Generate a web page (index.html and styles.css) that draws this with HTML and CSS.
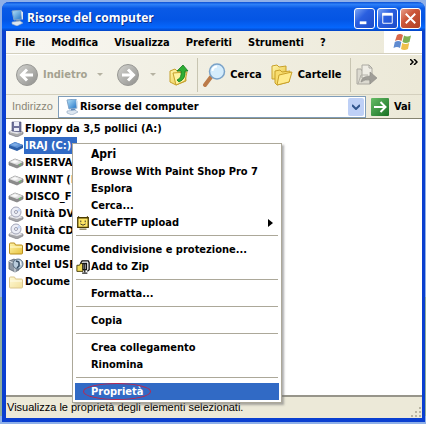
FILE: index.html
```html
<!DOCTYPE html>
<html lang="it">
<head>
  <meta charset="UTF-8" />
  <title>Risorse del computer</title>
  <meta name="viewport" content="width=device-width, initial-scale=1.0" />
  <link rel="stylesheet" href="styles.css">
</head>
<body>

<svg class="sprite" width="0" height="0" aria-hidden="true">
  <defs>
    <linearGradient id="gGray" x1="0" y1="0" x2="1" y2="1">
      <stop offset="0" stop-color="#d4d4d0" /><stop offset="1" stop-color="#8f8f8c" />
    </linearGradient>
    <linearGradient id="gYellow" x1="0" y1="0" x2="1" y2="1">
      <stop offset="0" stop-color="#fff6ae" /><stop offset="1" stop-color="#e8c23c" />
    </linearGradient>
    <linearGradient id="gGreen" x1="0" y1="0" x2="1" y2="1">
      <stop offset="0" stop-color="#67bd67" /><stop offset="1" stop-color="#187024" />
    </linearGradient>
    <linearGradient id="gScreen" x1="0" y1="0" x2="1" y2="1">
      <stop offset="0" stop-color="#b9e6fb" /><stop offset="1" stop-color="#1c6fc4" />
    </linearGradient>
  </defs>
  <symbol id="computer" viewBox="0 0 16 16">
    <path d="M3 1l9-1 1 9-8 1z" fill="url(#gScreen)" stroke="#7fa3c8" />
    <path d="M12 1l2 1v7l-1 1z" fill="#dbe6f2" />
    <path d="M7 10h4l1 2H7z" fill="#5d86ba" />
    <path d="M3 12l8-1 3 2-6 3-5-2z" fill="#dce6f0" stroke="#8ba4c0" stroke-width=".6" />
  </symbol>
  <symbol id="drive" viewBox="0 0 16 16">
    <path d="M1 7l6-3 8 3v3l-6 3-8-3z" fill="#8c8c8c" stroke="#777" stroke-width=".7" />
    <path d="M1 7l6-3 8 3-6 3z" fill="#dedede" />
    <path d="M3 7l4-2 4 2-4 1z" fill="#fafafa" />
    <path d="M11 10l2-1" stroke="#5bd45b" />
  </symbol>
  <symbol id="driveSel" viewBox="0 0 16 16">
    <path d="M1 7l6-3 8 3v3l-6 3-8-3z" fill="#2c5fa8" />
    <path d="M1 7l6-3 8 3-6 3z" fill="#5f93d6" />
    <path d="M3 7l4-2 4 2-4 1z" fill="#7eade6" />
  </symbol>
  <symbol id="floppy" viewBox="0 0 16 16">
    <path d="M1 11l4-2 10 2v2l-6 3-8-3z" fill="#aaa" stroke="#6c6c7c" stroke-width=".6" />
    <path d="M1 11l4-2 10 2-6 2z" fill="#e4e4ea" />
    <path d="M4 1h9v10l-9-1z" fill="#6f729c" stroke="#4c4f74" stroke-width=".6" />
    <path d="M6 1h5v4H6zM6 7h5v3H6z" fill="#eceef8" />
  </symbol>
  <symbol id="disc" viewBox="0 0 16 16">
    <path d="M1 11l5-3 9 3v2l-6 3-8-3z" fill="#a4a4a8" stroke="#77777c" stroke-width=".6" />
    <path d="M1 11l5-3 9 3-6 2z" fill="#e8e8ec" />
    <circle cx="8" cy="6" r="5" fill="#eceef6" stroke="#a2a5b8" />
    <path d="M8 6l3-4 2 3z" fill="#c8d8f4" />
    <circle cx="8" cy="6" r="1.500" fill="#fff" stroke="#8588a0" stroke-width=".8" />
  </symbol>
  <symbol id="folder" viewBox="0 0 16 16">
    <path d="M1.500 13V4q0-1 1-1h4l1 2h6q1 0 1 1v7q0 1-1 1h-11q-1 0-1-1z" fill="url(#gYellow)" stroke="#b98e1e" />
    <path d="M2 7h12" stroke="#fffbd6" />
  </symbol>
  <symbol id="usb" viewBox="0 0 16 16">
    <path d="M1 4l5-2 5 3v8l-4 2-6-3z" fill="#8e98a4" stroke="#4d5864" stroke-width=".7" />
    <path d="M1 4l6 3v8" fill="none" stroke="#e2e8ee" />
    <circle cx="10" cy="7" r="5" fill="#b9ccdc" stroke="#42586c" stroke-width=".8" />
    <path d="M8 4l3 1v4l-2 2" fill="none" stroke="#32485e" stroke-width="1.500" />
    <path d="M12 4l1 4" stroke="#fff" />
  </symbol>
  <symbol id="face" viewBox="0 0 16 16">
    <path d="M2 2h12v11H2z" fill="#ffe766" stroke="#4a3a00" stroke-width="1.500" />
    <path d="M3 2V0M13 2V0M4 15h8" stroke="#4a3a00" fill="none" />
    <path d="M5 5h1v2H5zM10 5h1v2h-1z" fill="#222" />
    <path d="M5 9q3 3 6 0" fill="none" stroke="#222" />
  </symbol>
  <symbol id="zip" viewBox="0 0 16 16">
    <path d="M1 6h3l1-2h3v9H1z" fill="#f2dc5a" stroke="#3c3200" />
    <path d="M5 4l2-3h7l1 2v8l-2 2" fill="none" stroke="#111" stroke-width="1.500" />
    <path d="M8 4h4v7H8z" fill="#fff" stroke="#111" stroke-width="1.500" />
    <path d="M10 4v10M7 15h6" fill="none" stroke="#222" stroke-width="1.500" />
  </symbol>
</svg>

<main class="window">
  <header class="titlebar">
    <svg class="icon"><use href="#computer" /></svg>
    <h1>Risorse del computer</h1>
    <button class="caption" aria-label="Riduci a icona"><svg viewBox="0 0 20 20"><path d="M5 13h7v3H5z" fill="#fff" /></svg></button>
    <button class="caption" aria-label="Ingrandisci"><svg viewBox="0 0 20 20"><path d="M5 5h10v10H5z" fill="none" stroke="#fff" /><path d="M4.500 4h11v3h-11z" fill="#fff" /></svg></button>
    <button class="caption close" aria-label="Chiudi"><svg viewBox="0 0 20 20"><path d="M5 5l10 10M15 5L5 15" stroke="#fff" stroke-width="2" /></svg></button>
  </header>

  <nav class="menubar">
    <button>File</button>
    <button>Modifica</button>
    <button>Visualizza</button>
    <button>Preferiti</button>
    <button>Strumenti</button>
    <button>?</button>
    <span class="flag">
      <svg viewBox="0 0 20 18" width="20" height="18">
        <path d="M4 2q3-2 6 0L8.500 8q-3-2-6.500 0z" fill="#d9694a" />
        <path d="M11 2.500q3 2 7 0L16.500 9q-4 2-7 0z" fill="#7fb052" />
        <path d="M1.800 9q3.500-2 6.500 0L7 15q-3-2-6.500 0z" fill="#5f8bd0" />
        <path d="M9.200 10q3 2 7 0L15 16q-4 2-7 0z" fill="#efc04a" />
      </svg>
    </span>
  </nav>

  <div class="toolbar">
    <button class="tool" disabled>
      <svg width="24" height="24" viewBox="0 0 24 24"><circle cx="12" cy="12" r="10.500" fill="url(#gGray)" stroke="#989894" /><path d="M18 12H8M12 6.500L6.500 12l5.500 5.500" fill="none" stroke="#fff" stroke-width="3" /></svg>
      Indietro
    </button>
    <span class="drop"></span>
    <button class="tool" disabled aria-label="Avanti">
      <svg width="24" height="24" viewBox="0 0 24 24"><circle cx="12" cy="12" r="10.500" fill="url(#gGray)" stroke="#989894" /><path d="M6 12h10M12 6.500l5.500 5.500-5.500 5.500" fill="none" stroke="#fff" stroke-width="3" /></svg>
    </button>
    <span class="drop"></span>
    <button class="tool" aria-label="Cartella superiore">
      <svg width="20" height="24" viewBox="0 0 20 24"><path d="M1 8l5-2 2 2 8-1 1 11-10 4-6-3z" fill="url(#gYellow)" stroke="#c5a02c" /><path d="M4 10l14-1-2 9-9 4z" fill="#fff3a0" stroke="#c5a02c" /><path d="M8 17q5-2 4-9H8l6-6 5 6h-3q1 8-6 11z" fill="#2fae35" stroke="#157a1e" stroke-width=".8" /></svg>
    </button>
    <span class="split"></span>
    <button class="tool">
      <svg width="24" height="24" viewBox="0 0 24 24"><path d="M9 14l-6 8" stroke="#bb7a48" stroke-width="4" stroke-linecap="round" /><circle cx="15" cy="8.500" r="7.500" fill="#d4ecfc" stroke="#7aa2c8" stroke-width="1.500" /><path d="M10.500 8q0-4 4.500-4.500" fill="none" stroke="#fff" stroke-width="2" /></svg>
      Cerca
    </button>
    <button class="tool">
      <svg width="24" height="24" viewBox="0 0 24 24"><path d="M2 16V3l5-1 2 2 7-1v13z" fill="url(#gYellow)" stroke="#c9a12a" /><path d="M5 20V8l5-1 2 2 8-1-1 11-12 3z" fill="#f8dc6c" stroke="#c9a12a" /><path d="M9 12l13-3-3 10-12 3z" fill="#ffeb8c" stroke="#c9a12a" /></svg>
      Cartelle
    </button>
    <span class="split"></span>
    <button class="tool" disabled aria-label="Sposta in">
      <svg width="24" height="24" viewBox="0 0 24 24"><path d="M2 6h4l1 2h8v13H2z" fill="#dcdad0" stroke="#aaa8a0" /><path d="M7 2h7l3 3v10H7z" fill="#efede5" stroke="#aaa8a0" /><path d="M14 2v3h3" fill="none" stroke="#aaa8a0" /><path d="M3 21l3-9h7" fill="none" stroke="#b4b2aa" /><path d="M6 19q1-6 9-6V9l7 6-7 6v-4q-5-1-9 2z" fill="#a09e98" stroke="#8c8a84" stroke-width=".6" /></svg>
    </button>
    <button class="more" aria-label="Altri pulsanti"><svg width="8" height="6" viewBox="0 0 8 6"><path d="M0 0l3 3-3 3M4 0l3 3-3 3" fill="none" stroke="#000" stroke-width="1.500" /></svg></button>
  </div>

  <div class="addressbar">
    <label for="address">Indirizzo</label>
    <div class="combo">
      <svg class="icon"><use href="#computer" /></svg>
      <select id="address">
        <option>Risorse del computer</option>
      </select>
      <span class="arrow"><svg width="8" height="6" viewBox="0 0 8 6"><path d="M0 1l4 4 4-4" fill="none" stroke="#30548c" stroke-width="2" /></svg></span>
    </div>
    <button class="go">
      <svg width="18" height="18" viewBox="0 0 18 18"><rect width="18" height="18" rx="1" fill="url(#gGreen)" /><path d="M3 9h11M9.500 4l5 5-5 5" fill="none" stroke="#fff" stroke-width="2" /></svg>
      Vai
    </button>
  </div>

  <section class="content">
    <ul class="files">
      <li><svg class="icon"><use href="#floppy" /></svg><span>Floppy da 3,5 pollici (A:)</span></li>
      <li class="selected"><svg class="icon"><use href="#driveSel" /></svg><span>IRAJ (C:)</span></li>
      <li><svg class="icon"><use href="#drive" /></svg><span>RISERVA</span></li>
      <li><svg class="icon"><use href="#drive" /></svg><span>WINNT (E</span></li>
      <li><svg class="icon"><use href="#drive" /></svg><span>DISCO_F</span></li>
      <li><svg class="icon"><use href="#disc" /></svg><span>Unità DV</span></li>
      <li><svg class="icon"><use href="#disc" /></svg><span>Unità CD</span></li>
      <li><svg class="icon"><use href="#folder" /></svg><span>Docume</span></li>
      <li><svg class="icon"><use href="#usb" /></svg><span>Intel USB</span></li>
      <li class="hidden-folder"><svg class="icon"><use href="#folder" /></svg><span>Docume</span></li>
    </ul>

    <div class="context-menu" role="menu">
      <button role="menuitem" class="default">Apri</button>
      <button role="menuitem">Browse With Paint Shop Pro 7</button>
      <button role="menuitem">Esplora</button>
      <button role="menuitem">Cerca...</button>
      <button role="menuitem"><svg class="icon"><use href="#face" /></svg>CuteFTP upload<span class="sub"></span></button>
      <hr>
      <button role="menuitem">Condivisione e protezione...</button>
      <button role="menuitem"><svg class="icon"><use href="#zip" /></svg>Add to Zip</button>
      <hr>
      <button role="menuitem">Formatta...</button>
      <hr>
      <button role="menuitem">Copia</button>
      <hr>
      <button role="menuitem">Crea collegamento</button>
      <button role="menuitem">Rinomina</button>
      <hr>
      <button role="menuitem" class="active"><span class="circled">Proprietà</span></button>
    </div>
  </section>

  <footer class="statusbar">
    <span>Visualizza le proprietà degli elementi selezionati.</span>
    <svg width="12" height="12" viewBox="0 0 12 12"><path d="M9 1h2v2H9zM5 5h2v2H5zM9 5h2v2H9zM1 9h2v2H1zM5 9h2v2H5zM9 9h2v2H9z" fill="#b8b4a2" /></svg>
  </footer>
</main>

</body>
</html>
```

FILE: styles.css
```css
* {
  box-sizing: border-box;
}
body {
  margin: 0;
  padding: 2px 1px 2px 2px;
  background: linear-gradient(#8fb0e8 70%, #8fae9c 70%, #8fae9c 98%, #8fb0e8 98%);
  font: bold 11px/17px "DejaVu Sans Condensed", "DejaVu Sans", sans-serif;
  color: #000;
}
button, select {
  font: inherit;
  color: inherit;
  background: none;
  border: none;
  margin: 0;
  padding: 0;
}
svg {
  display: block;
  flex: none;
}
.sprite {
  position: absolute;
}
.icon {
  width: 16px;
  height: 16px;
}
.window {
  display: flex;
  flex-direction: column;
  min-height: calc(100vh - 4px);
  border: 4px solid #0a3fd0;
  border-top: none;
  border-right-width: 3px;
  border-radius: 7px 7px 0 0;
  background: #ece9d8;
}

/* title bar */
.titlebar {
  display: flex;
  align-items: center;
  gap: 2px;
  height: 29px;
  margin: 0 -3px 0 -4px;
  padding: 3px 4px 0 7px;
  border-radius: 7px 7px 0 0;
  background: linear-gradient(#0b4fd4, #2d80f8 8%, #0a5ae6 22%, #0455e4 60%, #0566fc 88%, #0344c4);
}
.titlebar h1 {
  flex: 1;
  margin: 0;
  font: bold 12px/20px "Open Sans", sans-serif;
  color: #fff;
  text-shadow: 1px 1px #0a2f8c;
}
.caption {
  width: 21px;
  height: 21px;
  border: 1px solid #fff;
  border-radius: 3px;
  background: linear-gradient(135deg, #7ba5f4, #2a5fe0 40%, #1c4cc8);
}
.caption.close {
  background: linear-gradient(135deg, #e8a08c, #cc5638 40%, #b04024);
}

/* menu bar */
.menubar {
  display: flex;
  align-items: center;
  gap: 16px;
  height: 23px;
  padding-left: 9px;
  border-bottom: 1px solid #d4d0be;
  background: linear-gradient(90deg, #f8f7f2, #ece9d8);
}
.flag {
  display: flex;
  align-items: center;
  justify-content: center;
  align-self: stretch;
  width: 38px;
  margin-left: auto;
  background: #fff;
}

/* toolbar */
.toolbar {
  display: flex;
  align-items: center;
  gap: 8px;
  height: 41px;
  padding: 0 4px 0 9px;
  border-top: 1px solid #fff;
  border-bottom: 1px solid #d4d0be;
  background: linear-gradient(90deg, #f5f4ec, #ece9d8);
}
.tool {
  display: flex;
  align-items: center;
  gap: 4px;
}
.tool:disabled {
  color: #a5a291;
}
.drop {
  margin: 0 5px 0 2px;
  border: 3px solid transparent;
  border-top-color: #b5b2a2;
  border-bottom: none;
}
.split {
  width: 1px;
  height: 34px;
  margin-right: -4px;
  background: #c8c5b2;
}
.more {
  align-self: flex-start;
  margin-left: auto;
  padding-top: 4px;
}

/* address bar */
.addressbar {
  display: flex;
  align-items: center;
  gap: 5px;
  height: 23px;
  padding: 0 5px 0 6px;
  background: linear-gradient(90deg, #f5f4ec, #ece9d8);
}
.addressbar label {
  font-family: "Liberation Sans", sans-serif;
  font-weight: normal;
  color: #8a8778;
}
.combo {
  display: flex;
  align-items: center;
  flex: 1;
  height: 22px;
  padding: 1px;
  border: 1px solid #7f9db9;
  background: #fff;
}
.combo .icon {
  margin-left: 4px;
}
.combo select {
  flex: 1;
  appearance: none;
}
.arrow {
  display: flex;
  align-items: center;
  justify-content: center;
  width: 16px;
  height: 18px;
  border-radius: 2px;
  background: #bed0f6;
}
.go {
  display: flex;
  align-items: center;
  gap: 5px;
  padding-right: 6px;
}

/* drives and the menu over them */
.content {
  position: relative;
  flex: 1;
  border-top: 1px solid #85836f;
  border-bottom: 2px solid #97958a;
  background: #fff;
}
.files {
  list-style: none;
  margin: 0;
  padding: 1px 2px;
}
.files li {
  display: flex;
  align-items: center;
  height: 17px;
  white-space: nowrap;
}
.files span {
  padding: 0 1px;
}
.files .selected span {
  padding-right: 6px;
  background: #316ac5;
  color: #fff;
}
.hidden-folder .icon {
  opacity: .5;
}
.context-menu {
  position: absolute;
  top: 24px;
  left: 66px;
  width: 210px;
  padding: 2px;
  border: 1px solid #aca899;
  background: #fff;
  box-shadow: 2px 2px 2px #77777799;
}
.context-menu button {
  display: flex;
  align-items: center;
  width: 100%;
  height: 17px;
  padding-left: 16px;
  white-space: nowrap;
}
.context-menu .icon {
  width: 14px;
  height: 14px;
  margin: 0 1px 0 -15px;
}
.context-menu hr {
  margin: 4px 1px 5px;
  border: none;
  border-top: 1px solid #aca899;
}
.context-menu .default {
  font-size: 12px;
}
.context-menu .active {
  background: #316ac5;
  color: #fff;
}
.sub {
  margin: 0 6px 0 auto;
  border: 4px solid transparent;
  border-left: 5px solid #000;
  border-right: none;
}
.circled {
  margin-left: -8px;
  padding: 0 8px;
  border-radius: 50%;
  box-shadow: inset 0 0 0 1px #b82850;
}

.statusbar {
  display: flex;
  justify-content: space-between;
  align-items: center;
  height: 21px;
  padding-left: 1px;
  font-family: "Liberation Sans", sans-serif;
  font-weight: normal;
}
.statusbar svg {
  align-self: flex-end;
}
```
